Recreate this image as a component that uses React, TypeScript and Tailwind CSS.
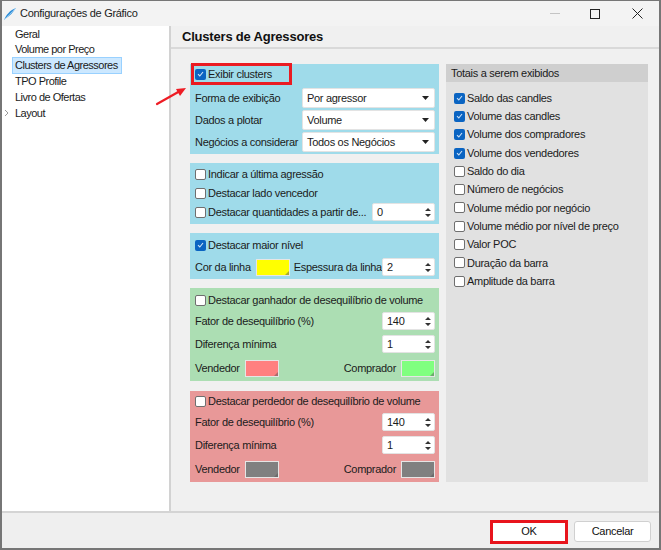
const font = "font-['Liberation_Sans',Arial,sans-serif]";

function Check({ on }: { on?: boolean }) {
  return on ? (
    <span className="flex h-[11px] w-[11px] shrink-0 items-center justify-center rounded-[2px] bg-[#0a64c2]">
      <svg width="7" height="6" viewBox="0 0 7 6">
        <path d="M1 3.2 L2.8 5 L6 1" fill="none" stroke="#cfe3f7" strokeWidth="1.1" />
      </svg>
    </span>
  ) : (
    <span className="h-[11px] w-[11px] shrink-0 rounded-[2px] border border-[#6f6f6f] bg-white" />
  );
}

function CheckRow({ on, label, className = "" }: { on?: boolean; label: string; className?: string }) {
  return (
    <div className={`flex h-[18px] items-center gap-[2px] ${className}`}>
      <Check on={on} />
      <span>{label}</span>
    </div>
  );
}

function Select({ value }: { value: string }) {
  return (
    <div className="flex h-[20px] w-[133px] shrink-0 items-center justify-between rounded-[2px] border border-[#e3e3e3] bg-white pl-[4px] pr-[5px]">
      <span>{value}</span>
      <svg width="7" height="4" viewBox="0 0 7 4">
        <path d="M0 0 H7 L3.5 4 Z" fill="#222" />
      </svg>
    </div>
  );
}

function Spin({ value, w = "w-[53px]" }: { value: string; w?: string }) {
  return (
    <div className={`flex h-[18px] ${w} shrink-0 items-center justify-between rounded-[2px] border border-[#e3e3e3] bg-white pl-[4px] pr-[3px]`}>
      <span>{value}</span>
      <svg width="6" height="11" viewBox="0 0 6 11">
        <path d="M0 4 L3 1 L6 4 Z M0 7 L3 10 L6 7 Z" fill="#333" />
      </svg>
    </div>
  );
}

function Swatch({ color }: { color: string }) {
  return (
    <div className={`relative h-[17px] w-[34px] shrink-0 border border-[#e6e6e6] ${color}`}>
      <svg className="absolute bottom-0 right-0" width="4" height="4" viewBox="0 0 4 4">
        <path d="M4 0 V4 H0 Z" fill="#555" opacity="0.5" />
      </svg>
    </div>
  );
}

const totals: [string, boolean][] = [
  ["Saldo das candles", true],
  ["Volume das candles", true],
  ["Volume dos compradores", true],
  ["Volume dos vendedores", true],
  ["Saldo do dia", false],
  ["Número de negócios", false],
  ["Volume médio por negócio", false],
  ["Volume médio por nível de preço", false],
  ["Valor POC", false],
  ["Duração da barra", false],
  ["Amplitude da barra", false],
];

const tree = ["Geral", "Volume por Preço", "Clusters de Agressores", "TPO Profile", "Livro de Ofertas"];

export default function App() {
  return (
    <div className={`relative flex h-[550px] w-[661px] flex-col whitespace-nowrap border-x-2 border-b-2 border-t border-[#767676] bg-[#efefef] text-[11px] tracking-[-0.3px] text-[#1b1b1b] ${font}`}>
      {/* title bar */}
      <div className="flex h-[25px] shrink-0 items-center bg-[#f3f3f3] pl-[1px]">
        <svg width="14" height="14" viewBox="0 0 14 14" className="mr-[3px]">
          <path d="M1 13 C3 8 7 3 13 1 C10 5 7 9 2 12 Z" fill="#2f8fd8" />
          <path d="M1 13 C4 10 8 6 13 1" stroke="#9fd0f5" strokeWidth="0.8" fill="none" />
        </svg>
        <span>Configurações de Gráfico</span>
        <div className="ml-auto flex h-full items-center">
          <div className="flex w-[40px] justify-center">
            <div className="h-px w-[10px] bg-[#c4c4c4]" />
          </div>
          <div className="flex w-[40px] justify-center">
            <div className="h-[10px] w-[10px] border border-[#222]" />
          </div>
          <div className="flex w-[44px] justify-center">
            <svg width="11" height="11" viewBox="0 0 11 11">
              <path d="M0.5 0.5 L10.5 10.5 M10.5 0.5 L0.5 10.5" stroke="#222" strokeWidth="1" />
            </svg>
          </div>
        </div>
      </div>

      <div className="flex min-h-0 flex-1">
        {/* tree */}
        <div className="w-[169px] shrink-0 border-r-2 border-[#d2d2d2] bg-white tracking-[-0.5px]">
          {tree.map((t) => (
            <div key={t} className="flex h-[15.8px] items-center pl-[10px]">
              <span
                className={
                  t === "Clusters de Agressores"
                    ? "border border-[#99d1ff] bg-[#cce8ff] pl-[2px] pr-[3px] leading-[15px]"
                    : "px-[3px]"
                }
              >
                {t}
              </span>
            </div>
          ))}
          <div className="flex h-[15.8px] items-center">
            <svg width="10" height="10" viewBox="0 0 10 10" className="ml-[1px]">
              <path d="M2 2 L5 5 L2 8" stroke="#9a9a9a" fill="none" strokeWidth="1" />
            </svg>
            <span className="pl-[2px]">Layout</span>
          </div>
        </div>

        {/* right pane */}
        <div className="flex min-w-0 flex-1 flex-col bg-[#f0f0f0]">
          <div className="flex h-[23px] shrink-0 items-center border-b-2 border-[#d9d9d9] pl-[11px] text-[13px] font-bold tracking-[-0.2px] text-[#111]">
            Clusters de Agressores
          </div>
          <div className="flex gap-[7px] pl-[19px] pt-[15px]">
            <div className="flex w-[249px] flex-col">
              {/* group 1 */}
              <div className="h-[90px] bg-[#9fdbea] pl-[5px] pr-[4px]">
                <div className="relative flex h-[20px] items-center">
                  <CheckRow on label="Exibir clusters" />
                  <div className="absolute left-[-4px] top-[-1px] h-[22px] w-[101px] border-[3px] border-[#ea1b22]" />
                </div>
                <div className="mt-[4px] flex flex-col gap-[2px]">
                  <div className="flex items-center justify-between">
                    <span>Forma de exibição</span>
                    <Select value="Por agressor" />
                  </div>
                  <div className="flex items-center justify-between">
                    <span>Dados a plotar</span>
                    <Select value="Volume" />
                  </div>
                  <div className="flex items-center justify-between">
                    <span>Negócios a considerar</span>
                    <Select value="Todos os Negócios" />
                  </div>
                </div>
              </div>

              {/* group 2 */}
              <div className="mt-[9px] flex h-[61px] flex-col gap-[1px] bg-[#9fdbea] pl-[5px] pr-[4px] pt-[2px]">
                <CheckRow label="Indicar a última agressão" />
                <CheckRow label="Destacar lado vencedor" />
                <div className="flex items-center justify-between">
                  <CheckRow label="Destacar quantidades a partir de..." />
                  <Spin value="0" w="w-[63px]" />
                </div>
              </div>

              {/* group 3 */}
              <div className="mt-[9px] h-[46px] bg-[#9fdbea] pl-[5px] pr-[4px] pt-[3px]">
                <CheckRow on label="Destacar maior nível" />
                <div className="mt-[4px] flex h-[18px] items-center">
                  <span>Cor da linha</span>
                  <div className="ml-[5px]">
                    <Swatch color="bg-[#ffff00]" />
                  </div>
                  <span className="ml-[4px]">Espessura da linha</span>
                  <div className="ml-auto">
                    <Spin value="2" />
                  </div>
                </div>
              </div>

              {/* group 4 */}
              <div className="mt-[9px] h-[93px] bg-[#acdeb3] pl-[5px] pr-[4px] pt-[3px]">
                <CheckRow label="Destacar ganhador de desequilíbrio de volume" />
                <div className="mt-[3px] flex items-center justify-between">
                  <span>Fator de desequilíbrio (%)</span>
                  <Spin value="140" />
                </div>
                <div className="mt-[5px] flex items-center justify-between">
                  <span>Diferença mínima</span>
                  <Spin value="1" />
                </div>
                <div className="mt-[6px] flex h-[18px] items-center">
                  <span>Vendedor</span>
                  <div className="ml-[5px]">
                    <Swatch color="bg-[#ff8080]" />
                  </div>
                  <span className="ml-auto mr-[5px]">Comprador</span>
                  <Swatch color="bg-[#80ff80]" />
                </div>
              </div>

              {/* group 5 */}
              <div className="mt-[10px] h-[91px] bg-[#e89898] pl-[5px] pr-[4px] pt-[1px]">
                <CheckRow label="Destacar perdedor de desequilíbrio de volume" />
                <div className="mt-[3px] flex items-center justify-between">
                  <span>Fator de desequilíbrio (%)</span>
                  <Spin value="140" />
                </div>
                <div className="mt-[5px] flex items-center justify-between">
                  <span>Diferença mínima</span>
                  <Spin value="1" />
                </div>
                <div className="mt-[6px] flex h-[18px] items-center">
                  <span>Vendedor</span>
                  <div className="ml-[5px]">
                    <Swatch color="bg-[#808080]" />
                  </div>
                  <span className="ml-auto mr-[5px]">Comprador</span>
                  <Swatch color="bg-[#808080]" />
                </div>
              </div>
            </div>

            {/* totals */}
            <div className="h-[418px] w-[202px] bg-[#e1e1e1]">
              <div className="flex h-[18px] items-center bg-[#cfcfcf] pl-[5px]">Totais a serem exibidos</div>
              <div className="pl-[8px] pt-[7px]">
                {totals.map(([t, on]) => (
                  <div key={t} className="flex h-[18.3px] items-center gap-[2px]">
                    <Check on={on} />
                    <span>{t}</span>
                  </div>
                ))}
              </div>
            </div>
          </div>
        </div>
      </div>

      {/* footer */}
      <div className="flex h-[37px] shrink-0 items-center justify-end gap-[6px] border-t-2 border-[#d4d4d4] pr-[8px] pt-[2px]">
        <div className="border-[3px] border-[#e8141c]">
          <button className="flex h-[18px] w-[72px] items-center justify-center bg-white text-[#111]">OK</button>
        </div>
        <button className="flex h-[21px] w-[77px] items-center justify-center rounded-[3px] border border-[#d0d0d0] bg-white text-[#111]">
          Cancelar
        </button>
      </div>

      {/* annotation arrow */}
      <svg className="absolute left-[150px] top-[84px]" width="40" height="24" viewBox="0 0 40 24">
        <path d="M5 19 L28 6" stroke="#ee1c24" strokeWidth="2.2" strokeLinecap="round" />
        <path d="M34 3 L24 4 L28 11 Z" fill="#ee1c24" />
      </svg>
    </div>
  );
}
